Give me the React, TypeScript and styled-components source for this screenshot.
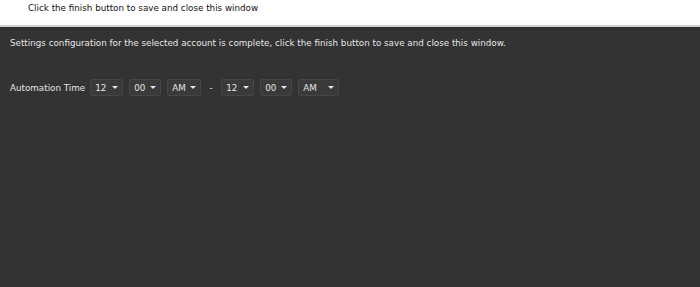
import React from "react";
import styled, { createGlobalStyle } from "styled-components";

const GlobalStyle = createGlobalStyle`
  html, body {
    margin: 0;
    padding: 0;
    height: 100%;
    background: #333333;
    overflow: hidden;
  }
  #root {
    height: 100%;
  }
`;

const Page = styled.div`
  display: flex;
  flex-direction: column;
  height: 100%;
  font-family: "DejaVu Sans", Verdana, sans-serif;
  font-size: 8.75px;
`;

const Header = styled.div`
  background: #ffffff;
  height: 25px;
  border-bottom: 2px solid #d2d2d2;
  padding-left: 28px;
  color: #111;
  overflow: hidden;
`;

const Title = styled.div`
  font-weight: bold;
  margin-top: -7px;
  line-height: 9px;
`;

const Subtitle = styled.div`
  line-height: 12px;
`;

const Body = styled.div`
  flex: 1;
  background: #333333;
  color: #e6e6e6;
  padding: 10px 10px;
`;

const Intro = styled.p`
  margin: 0 0 30px;
  line-height: 12px;
`;

const Row = styled.div`
  display: flex;
  align-items: center;
  gap: 6px;
`;

const Label = styled.span`
  margin-right: -1px;
`;

const Dash = styled.span`
  width: 8px;
  text-align: center;
`;

const Select = styled.div<{ $w: number }>`
  width: ${(p) => p.$w}px;
  height: 17px;
  box-sizing: border-box;
  background: #3a3a3a;
  border: 1px solid #464646;
  border-radius: 2px;
  display: flex;
  align-items: center;
  justify-content: space-between;
  padding: 0 4px 0 4px;
  color: #e6e6e6;
`;

const Caret = styled.span`
  width: 0;
  height: 0;
  border-left: 3px solid transparent;
  border-right: 3px solid transparent;
  border-top: 3px solid #e6e6e6;
`;

function Drop({ value, w }: { value: string; w: number }) {
  return (
    <Select $w={w}>
      <span>{value}</span>
      <Caret />
    </Select>
  );
}

export default function App() {
  return (
    <>
      <GlobalStyle />
      <Page>
        <Header>
          <Title>Finish</Title>
          <Subtitle>Click the finish button to save and close this window</Subtitle>
        </Header>
        <Body>
          <Intro>
            Settings configuration for the selected account is complete, click the finish
            button to save and close this window.
          </Intro>
          <Row>
            <Label>Automation Time</Label>
            <Drop value="12" w={33} />
            <Drop value="00" w={32} />
            <Drop value="AM" w={34} />
            <Dash>-</Dash>
            <Drop value="12" w={33} />
            <Drop value="00" w={32} />
            <Drop value="AM" w={41} />
          </Row>
        </Body>
      </Page>
    </>
  );
}
